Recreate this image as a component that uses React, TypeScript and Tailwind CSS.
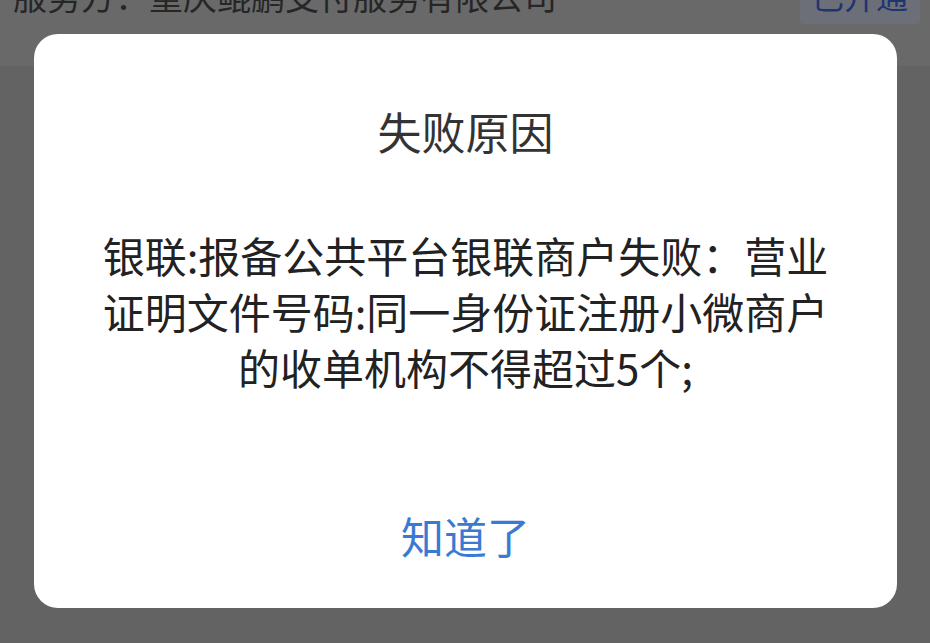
// FailReasonDialog - 失败原因弹窗
import React from 'react';

export default function App() {
    return (
        <div className="relative w-[930px] h-[643px] overflow-hidden bg-[#636363] font-['Noto_Sans_CJK_SC',sans-serif]">
            {/* Page header behind overlay */}
            <div className="h-[66px] bg-[#696969] flex items-start justify-between pl-[13px] pr-[10px]">
                <span className="-mt-[21px] text-[34px] leading-none text-[#262626] whitespace-nowrap">
                    服务方：重庆鲲鹏支付服务有限公司
                </span>
                <div className="h-[24px] w-[120px] bg-[#6c6f78] rounded-b-[4px] flex items-start justify-center overflow-hidden">
                    <span className="-mt-[21px] text-[32px] leading-none text-[#1f3572] whitespace-nowrap">已开通</span>
                </div>
            </div>

            {/* Modal */}
            <div className="absolute left-[34px] top-[34px] w-[863px] h-[574px] rounded-[24px] bg-white flex flex-col items-center pt-[68px] pb-[45px]">
                <h2 className="text-[44px] leading-[58px] text-[#333333] font-normal">失败原因</h2>
                <p className="mt-[67px] px-[60px] text-center text-[42px] leading-[56px] text-[#222222]">
                    银联:报备公共平台银联商户失败：营业证明文件号码:同一身份证注册小微商户的收单机构不得超过5个;
                </p>
                <button className="mt-auto text-[43px] leading-[56px] text-[#3b7ad3]">知道了</button>
            </div>
        </div>
    );
}
